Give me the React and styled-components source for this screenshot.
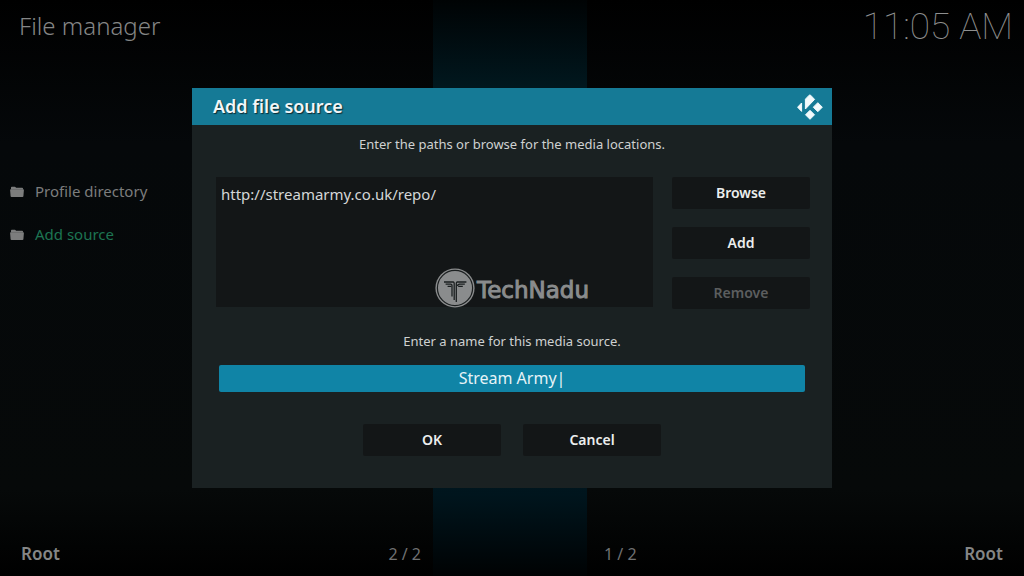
import React from 'react';
import styled, { createGlobalStyle } from 'styled-components';

const GlobalStyle = createGlobalStyle`
  * {
    box-sizing: border-box;
  }
  body {
    background: #040607;
    font-family: "Noto Sans", "Open Sans", sans-serif;
    margin: 0px;
  }
`;

const FolderIcon = () => (
  <svg width="14" height="12" viewBox="0 0 14 12" fill="currentColor" aria-hidden="true">
    <path d="M1 3.4V1.6Q1 .8 1.8.8H5L6.2 1.8H12.2Q13 1.8 13 2.6V3.4Z" />
    <path d="M.8 3.2H13.2Q14 3.2 13.9 4L13.4 10.2Q13.3 11 12.5 11H1.5Q.7 11 .6 10.2L.1 4Q0 3.2.8 3.2Z" />
  </svg>
);

const KodiLogo = () => (
  <svg width="26" height="26" viewBox="0 0 26 26" fill="#f2fafc" stroke="#f2fafc" strokeLinejoin="round" aria-hidden="true">
    <path d="M4.6 9V17.4L.6 13.2Z" />
    <path d="M8.4 5.2L12.2 1.2Q12.9.6 13.6 1.2L17.6 5.4L8.4 15Z" />
    <path d="M20.8 8.7L25.3 13.2L20.8 17.7L16.3 13.2Z" />
    <path d="M13 16.3L17.5 20.8L13 25.3L8.5 20.8Z" />
  </svg>
);

const Emblem = () => (
  <svg width="40" height="40" viewBox="0 0 40 40" aria-hidden="true">
    <circle cx="20" cy="20" r="19.6" fill="#8a8c8d" />
    <circle cx="20" cy="20" r="17.6" fill="none" stroke="#1b1f20" strokeWidth="1.2" />
    <g fill="none" stroke="#1b1f20" strokeWidth="1.3">
      <path d="M9 14H18.3Q19.2 14.2 19.2 15.4V32" />
      <path d="M31.4 14H22.2Q21.3 14.2 21.3 15.4V34" />
      <path d="M10.6 16.2H15.6Q17 16.3 17 17.4V28.5" />
      <path d="M29.8 16.2H24.2L22 17.6" />
      <path d="M12.6 18.4H16.4M27.8 18.4H23.2" />
    </g>
  </svg>
);

const Panel = ({ children, name, count, reverse }) => (
  <SectionPanel>
    {children}
    <DivFooter $reverse={reverse}>
      <StrongName>{name}</StrongName>
      <SpanCount>{count}</SpanCount>
    </DivFooter>
  </SectionPanel>
);

const AddSourceDialog = () => (
  <DivOverlay>
    <FormDialog role="dialog" aria-labelledby="dialog-title" onSubmit={(e) => e.preventDefault()}>
      <HeaderDialog>
        <DialogTitle id="dialog-title">Add file source</DialogTitle>
        <KodiLogo />
      </HeaderDialog>
      <DivBody>
        <Hint id="paths-hint">Enter the paths or browse for the media locations.</Hint>
        <DivSources>
          <UlPaths aria-labelledby="paths-hint">
            <li>http://streamarmy.co.uk/repo/</li>
          </UlPaths>
          <DivActions>
            <Button type="button">Browse</Button>
            <Button type="button">Add</Button>
            <Button type="button" disabled>Remove</Button>
          </DivActions>
        </DivSources>
        <Hint as="label" htmlFor="source-name">Enter a name for this media source.</Hint>
        <InputName id="source-name" type="text" defaultValue="Stream Army|" />
        <DivButtons>
          <Button type="submit">OK</Button>
          <Button type="button">Cancel</Button>
        </DivButtons>
      </DivBody>
      <DivWatermark>
        <Emblem />
        <span>TechNadu</span>
      </DivWatermark>
    </FormDialog>
  </DivOverlay>
);

const App = () => (
  <>
    <GlobalStyle />
    <Main>
      <Panel name="Root" count="2 / 2">
        <PageTitle>File manager</PageTitle>
        <Nav>
          <ButtonEntry type="button">
            <FolderIcon />
            <span>Profile directory</span>
          </ButtonEntry>
          <ButtonEntry type="button" $active>
            <FolderIcon />
            <span>Add source</span>
          </ButtonEntry>
        </Nav>
      </Panel>
      <DivBand />
      <Panel name="Root" count="1 / 2" reverse>
        <Time>11:05 AM</Time>
      </Panel>
    </Main>
    <AddSourceDialog />
  </>
);

const Main = styled.main`
  background: linear-gradient(#000000, #05080a 25%, #060909 85%, #000000);
  display: grid;
  grid-template-columns: 433fr 154fr 437fr;
  min-height: 100vh;
`;

const SectionPanel = styled.section`
  display: flex;
  flex-direction: column;
  min-width: 0px;
`;

const DivBand = styled.div`
  background: linear-gradient(#000304, #01171e 15%, #00202b 50%, #00151d 86%, #000203);
`;

const PageTitle = styled.h1`
  color: #858686;
  font-size: 24px;
  font-weight: 300;
  line-height: 32px;
  margin: 0px;
  padding: 10px 19px;
`;

const Time = styled.time`
  color: #8e8f8f;
  font-family: Roboto, sans-serif;
  font-size: 37px;
  font-weight: 100;
  line-height: 54px;
  padding: 0px 11px;
  text-align: right;
`;

const Nav = styled.nav`
  display: flex;
  flex-direction: column;
  padding-top: 118px;
`;

const ButtonEntry = styled.button`
  align-items: center;
  background: transparent;
  border: 0px;
  color: #7c7d7d;
  cursor: pointer;
  display: flex;
  font: 400 15px "Noto Sans", sans-serif;
  gap: 11px;
  height: 43px;
  padding: 0px 10px;
  span {
    color: ${(props) => (props.$active ? '#1d7452' : 'inherit')};
    padding-bottom: 2px;
  }
`;

const DivFooter = styled.footer`
  align-items: center;
  display: flex;
  flex-direction: ${(props) => (props.$reverse ? 'row-reverse' : 'row')};
  justify-content: space-between;
  line-height: 24px;
  margin-top: auto;
  padding: ${(props) => (props.$reverse ? '10px 21px 10px 17px' : '10px 12px 10px 21px')};
`;

const StrongName = styled.strong`
  color: #858686;
  font-size: 17px;
  font-weight: 600;
`;

const SpanCount = styled.span`
  color: #707172;
  font-size: 16px;
`;

const DivOverlay = styled.div`
  align-items: center;
  display: flex;
  inset: 0px;
  justify-content: center;
  position: fixed;
`;

const FormDialog = styled.form`
  background: #1a2122;
  position: relative;
  width: 62.5%;
`;

const HeaderDialog = styled.header`
  align-items: center;
  background: #157a96;
  display: flex;
  height: 37px;
  justify-content: space-between;
  padding: 0px 9px 0px 21px;
`;

const DialogTitle = styled.h2`
  color: #f0f6f8;
  font-size: 18px;
  font-weight: 600;
  line-height: 24px;
  margin: 0px;
  padding-bottom: 2px;
  text-shadow: 1px 1px 1px #0b2a33;
`;

const DivBody = styled.div`
  align-items: center;
  display: flex;
  flex-direction: column;
  padding: 7px 22px 32px;
`;

const Hint = styled.p`
  color: #cfd1d1;
  font-size: 13px;
  line-height: 24px;
  margin: 0px;
`;

const DivSources = styled.div`
  align-items: flex-start;
  align-self: stretch;
  display: flex;
  gap: 19px;
  margin: 21px 0px 20px;
  padding-left: 2px;
`;

const UlPaths = styled.ul`
  background: #131617;
  color: #d5d7d7;
  flex: 1;
  font-size: 15px;
  line-height: 24px;
  list-style: none;
  margin: 0px;
  min-height: 130px;
  padding: 5px;
`;

const DivActions = styled.div`
  display: flex;
  flex-direction: column;
  gap: 18px;
`;

const Button = styled.button`
  background: #131617;
  border: 0px;
  border-radius: 2px;
  color: #eceeee;
  cursor: pointer;
  font: 600 14px "Noto Sans", sans-serif;
  height: 32px;
  padding: 0px 0px 2px;
  width: 138px;
  &:disabled {
    color: #5c5e5f;
    cursor: default;
  }
`;

const InputName = styled.input`
  background: #1084a6;
  border: 0px;
  border-radius: 2px;
  color: #e6f3f7;
  font: 400 16px "Noto Sans", sans-serif;
  height: 27px;
  margin: 12px 0px 32px;
  outline: none;
  padding: 0px 0px 2px;
  text-align: center;
  width: calc(100% - 10px);
`;

const DivButtons = styled.div`
  display: flex;
  gap: 22px;
`;

const DivWatermark = styled.div`
  align-items: center;
  color: #8a8c8d;
  display: flex;
  font: 400 23px "DejaVu Sans", sans-serif;
  gap: 2px;
  justify-content: center;
  left: 0px;
  pointer-events: none;
  position: absolute;
  right: 0px;
  top: 180px;
  -webkit-text-stroke: 1px #8a8c8d;
  span {
    padding-top: 4px;
  }
`;

export default App;
